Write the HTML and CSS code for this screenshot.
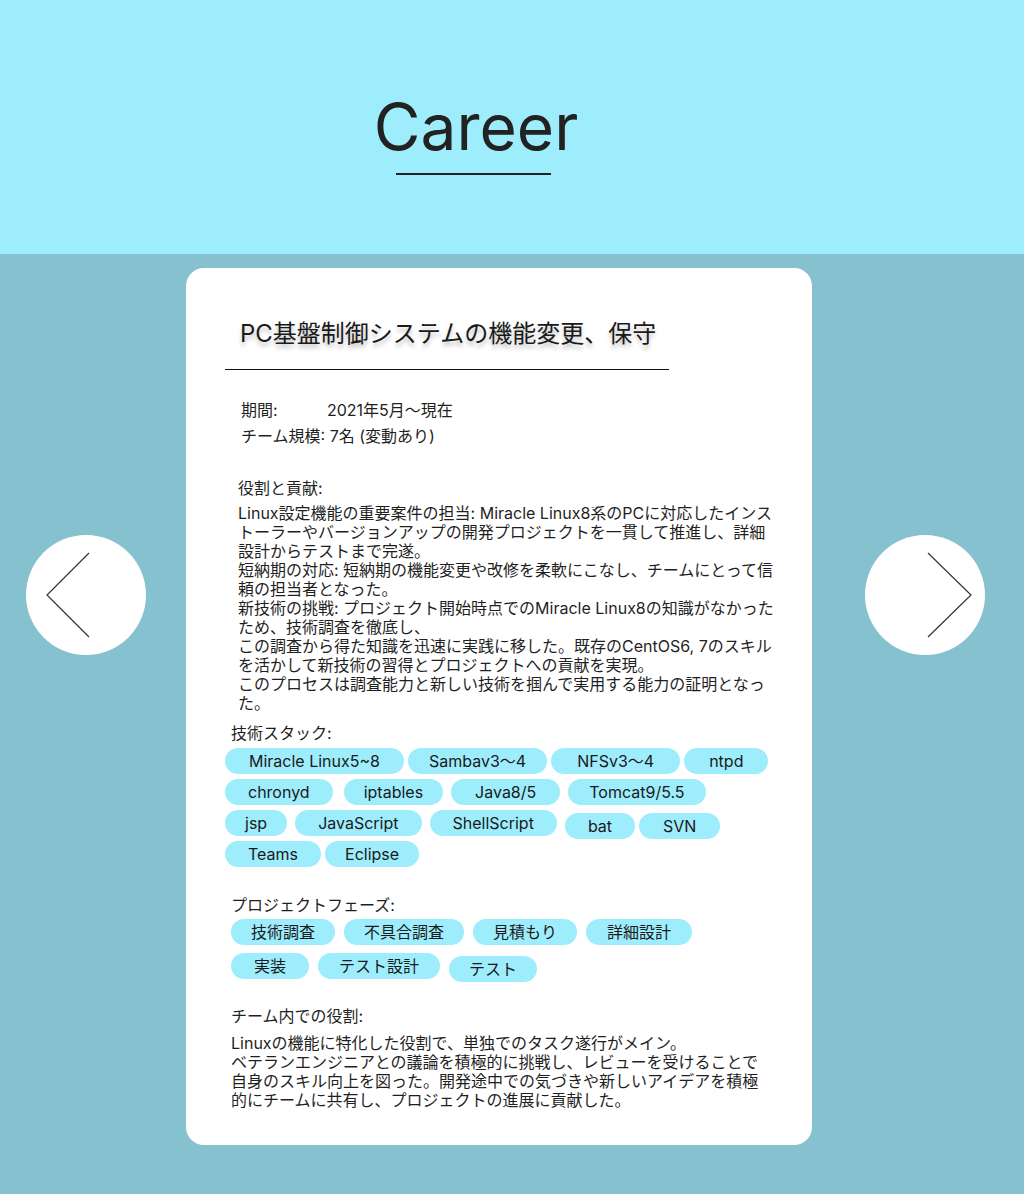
FILE: index.html
```html
<!DOCTYPE html>
<html lang="ja">
<head>
<meta charset="utf-8">
<title>Career</title>
<link rel="stylesheet" href="styles.css">
</head>
<body>
<header class="hero">
  <h1 class="hero-title">Career</h1>
  <div class="hero-rule"></div>
</header>
<main class="stage">
  <button class="nav nav-prev" aria-label="前へ">
    <svg width="120" height="120" viewBox="0 0 120 120"><polyline points="63,18 21,60 63,102" fill="none" stroke="#333" stroke-width="1.2"/></svg>
  </button>
  <article class="card">
    <h2 class="card-title">PC基盤制御システムの機能変更、保守</h2>
    <div class="card-rule"></div>
    <div class="meta">
      <p class="meta-row"><span class="meta-label">期間:</span>2021年5月〜現在</p>
      <p class="meta-row">チーム規模: 7名 (変動あり)</p>
    </div>
    <h3 class="sec-label sec-role">役割と貢献:</h3>
    <p class="body-text body-role">Linux設定機能の重要案件の担当: Miracle Linux8系のPCに対応したインストーラーやバージョンアップの開発プロジェクトを一貫して推進し、詳細設計からテストまで完遂。<br>短納期の対応: 短納期の機能変更や改修を柔軟にこなし、チームにとって信頼の担当者となった。<br>新技術の挑戦: プロジェクト開始時点でのMiracle Linux8の知識がなかったため、技術調査を徹底し、<br>この調査から得た知識を迅速に実践に移した。既存のCentOS6, 7のスキルを活かして新技術の習得とプロジェクトへの貢献を実現。<br>このプロセスは調査能力と新しい技術を掴んで実用する能力の証明となった。</p>
    <h3 class="sec-label sec-stack">技術スタック:</h3>
    <ul class="tags tags-stack">
      <li class="tag tag-p24">Miracle Linux5~8</li>
      <li class="tag tag-p21">Sambav3〜4</li>
      <li class="tag tag-p26">NFSv3〜4</li>
      <li class="tag tag-p25">ntpd</li>
      <li class="tag">chronyd</li>
      <li class="tag tag-p20 tag-ml11">iptables</li>
      <li class="tag tag-p24 tag-ml8">Java8/5</li>
      <li class="tag tag-p21 tag-ml8">Tomcat9/5.5</li>
      <li class="tag tag-p20">jsp</li>
      <li class="tag tag-ml8">JavaScript</li>
      <li class="tag tag-ml8">ShellScript</li>
      <li class="tag tag-ml8 tag-low">bat</li>
      <li class="tag tag-p24 tag-low">SVN</li>
      <li class="tag">Teams</li>
      <li class="tag tag-p20">Eclipse</li>
    </ul>
    <h3 class="sec-label sec-phase">プロジェクトフェーズ:</h3>
    <ul class="tags tags-phase">
      <li class="tag tag-jp">技術調査</li>
      <li class="tag tag-jp">不具合調査</li>
      <li class="tag tag-jp">見積もり</li>
      <li class="tag tag-jp tag-jp-md">詳細設計</li>
      <li class="tag tag-jp tag-jp-wide">実装</li>
      <li class="tag tag-jp tag-jp-md">テスト設計</li>
      <li class="tag tag-jp tag-low">テスト</li>
    </ul>
    <h3 class="sec-label sec-team">チーム内での役割:</h3>
    <p class="body-text body-team">Linuxの機能に特化した役割で、単独でのタスク遂行がメイン。<br>ベテランエンジニアとの議論を積極的に挑戦し、レビューを受けることで自身のスキル向上を図った。開発途中での気づきや新しいアイデアを積極的にチームに共有し、プロジェクトの進展に貢献した。</p>
  </article>
  <button class="nav nav-next" aria-label="次へ">
    <svg width="120" height="120" viewBox="0 0 120 120"><polyline points="63,18 106,60 63,102" fill="none" stroke="#333" stroke-width="1.2"/></svg>
  </button>
</main>
</body>
</html>
```

FILE: styles.css
```css
* { box-sizing: border-box; }

html, body {
  margin: 0;
  padding: 0;
}

body {
  font-family: Inter, "Noto Sans CJK JP", sans-serif;
  color: #1f1f1f;
  background: #86c1cf;
}

.hero {
  height: 254px;
  background: #9eedfd;
  display: flex;
  flex-direction: column;
  align-items: center;
  padding-top: 88px;
  padding-right: 72px;
}

.hero-title {
  margin: 0;
  font-size: 64px;
  font-weight: 400;
  line-height: 77px;
  color: #222;
}

.hero-rule {
  width: 155px;
  height: 1.5px;
  background: #222;
  margin-top: 8px;
  margin-left: -6px;
}

.stage {
  position: relative;
  height: 940px;
  background: #86c1cf;
  padding-top: 14px;
}

.nav {
  position: absolute;
  top: 281px;
  width: 120px;
  height: 120px;
  border: 0;
  padding: 0;
  border-radius: 50%;
  background: #fff;
  cursor: pointer;
}

.nav svg { display: block; }

.nav-prev { left: 26px; }
.nav-next { left: 865px; }

.card {
  margin-left: 186px;
  width: 626px;
  background: #fff;
  border-radius: 18px;
  padding: 50px 0 35px 0;
}

.card-title {
  margin: 0 0 0 54px;
  font-size: 24px;
  font-weight: 400;
  line-height: 32px;
  color: #1a1a1a;
  text-shadow: 0 4px 4px rgba(0, 0, 0, 0.25);
}

.card-rule {
  margin: 19px 0 0 39px;
  width: 444px;
  height: 1px;
  background: #111;
}

.meta {
  margin: 27px 0 0 55px;
}

.meta-row {
  margin: 0;
  font-size: 16px;
  line-height: 26px;
}

.meta-label {
  display: inline-block;
  width: 86px;
}

.sec-label {
  margin: 0;
  font-size: 16px;
  font-weight: 400;
  line-height: 24px;
}

.sec-role { margin: 27px 0 0 52px; }
.sec-stack { margin: 8px 0 0 45px; }
.sec-phase { margin: 26px 0 0 45px; }
.sec-team { margin: 25px 0 0 45px; }

.body-text {
  margin: 0;
  font-size: 16px;
  line-height: 19px;
}

.body-role {
  margin: 4px 0 0 52px;
  width: 540px;
}

.body-team {
  margin: 6px 0 0 45px;
  width: 535px;
}

.tags {
  list-style: none;
  margin: 0;
  padding: 0;
  display: flex;
  flex-wrap: wrap;
  align-items: flex-start;
}

.tags-stack {
  margin: 3px 0 0 35px;
  width: 549px;
  row-gap: 5px;
}

.tags-stack .tag { margin-left: 4px; }
.tags-stack .tag-ml8 { margin-left: 8px; }
.tags-stack .tag-ml11 { margin-left: 11px; }

.tags-phase {
  margin: 2px 0 0 45px;
  width: 480px;
  column-gap: 9px;
  row-gap: 8px;
}

.tag {
  height: 26px;
  line-height: 26px;
  padding: 0 23px;
  border-radius: 13px;
  background: #9eedfd;
  font-size: 16px;
  color: #1a1a1a;
  white-space: nowrap;
}

.tag-p20 { padding: 0 20px; }
.tag-p21 { padding: 0 21px; }
.tag-p24 { padding: 0 24px; }
.tag-p25 { padding: 0 25px; }
.tag-p26 { padding: 0 26px; }
.tag-low { margin-top: 3px; margin-bottom: -3px; }

.tag-jp { padding: 0 20px; }
.tag-jp-md { padding: 0 21px; }
.tag-jp-wide { padding: 0 23px; }
```
